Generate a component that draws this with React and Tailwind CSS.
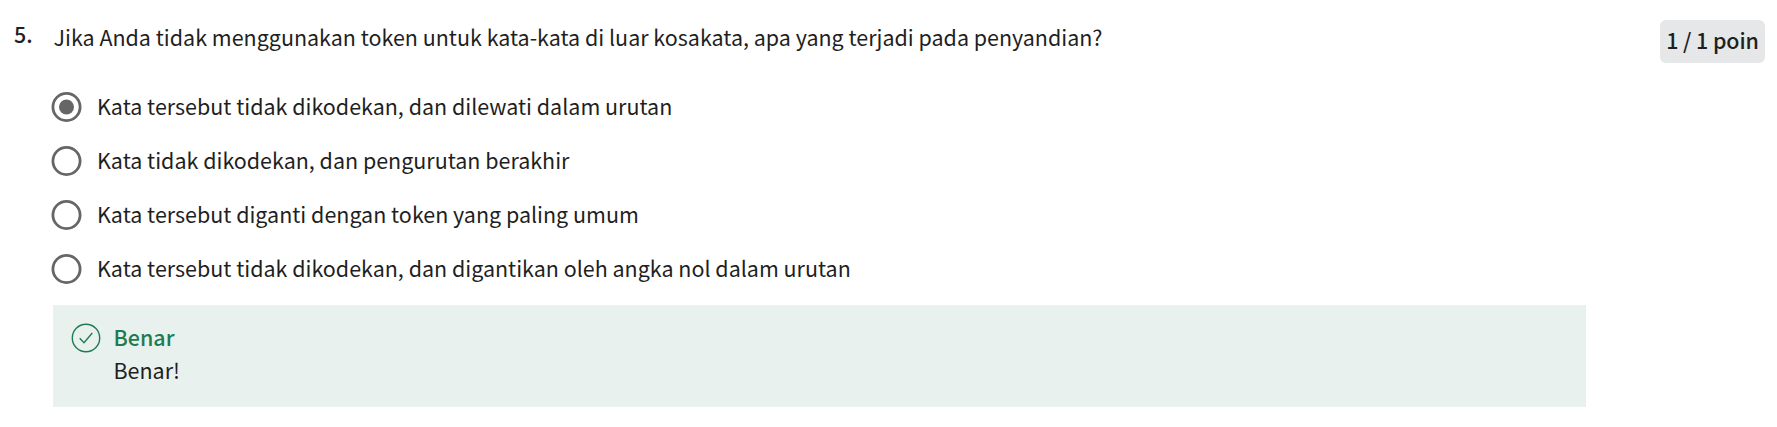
const options = [
  { text: "Kata tersebut tidak dikodekan, dan dilewati dalam urutan", checked: true },
  { text: "Kata tidak dikodekan, dan pengurutan berakhir", checked: false },
  { text: "Kata tersebut diganti dengan token yang paling umum", checked: false },
  { text: "Kata tersebut tidak dikodekan, dan digantikan oleh angka nol dalam urutan", checked: false },
];

function Radio({ checked }) {
  return (
    <svg className="h-[30px] w-[31px] shrink-0" viewBox="0 0 31 30" fill="none">
      <circle cx="15.5" cy="15" r="13.6" stroke="#666" strokeWidth="2.8" />
      {checked && <circle cx="15.5" cy="15" r="7.5" fill="#666" />}
    </svg>
  );
}

function Feedback() {
  return (
    <div className="mt-[19px] flex h-[102px] w-[1533px] gap-[12.5px] bg-[#e8f1ee] pl-[18px] pt-[15px]">
      <svg className="mt-[3px] size-[30px] shrink-0" viewBox="0 0 30 30" fill="none" stroke="#1d7c50" strokeWidth="1.4">
        <circle cx="15" cy="15" r="13.7" />
        <path d="M8.7 15.3 13 19.7 21.3 10" />
      </svg>
      <div className="leading-[33px]">
        <p className="font-medium text-[#1d7c50]">Benar</p>
        <p>Benar!</p>
      </div>
    </div>
  );
}

export default function App() {
  return (
    <main className="flex h-[427px] items-start bg-white font-['Noto_Sans_CJK_SC',sans-serif] text-[21.48px] leading-[31px] text-[#1f1f1f]">
      <div className="w-[53px] shrink-0 pl-[14px] pt-[18px] font-medium">5.</div>
      <div className="flex-1 pt-[21px]">
        <h1 className="whitespace-nowrap pl-[0.5px]">
          Jika Anda tidak menggunakan token untuk kata-kata di luar kosakata, apa yang terjadi pada penyandian?
        </h1>
        <ul className="mt-[38px] flex flex-col gap-5">
          {options.map((o) => (
            <li key={o.text} className="-ml-[2px] flex h-[34px] items-center gap-[15px]">
              <Radio checked={o.checked} />
              <span className="whitespace-nowrap pb-[3px]">{o.text}</span>
            </li>
          ))}
        </ul>
        <Feedback />
      </div>
      <div className="mr-3 mt-5 h-[43px] w-[105px] whitespace-nowrap rounded-md bg-[#e5e7e8] pt-1 text-center font-medium tracking-[-0.1px]">
        1 / 1 poin
      </div>
    </main>
  );
}
